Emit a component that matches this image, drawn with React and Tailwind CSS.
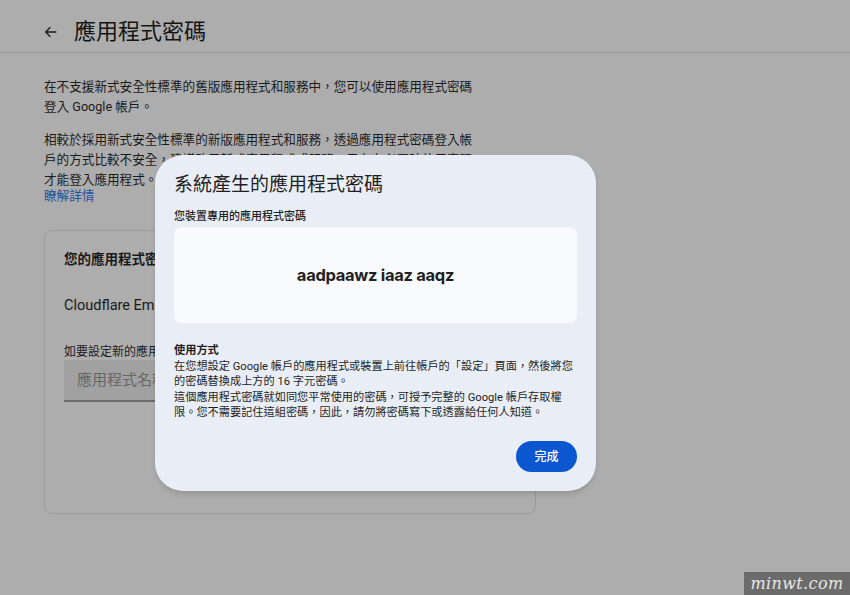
import React from 'react';

const font = { fontFamily: 'Roboto, "Noto Sans CJK TC", sans-serif' };

const BackArrow = () => (
    <svg width="16" height="16" viewBox="0 0 24 24" fill="none" stroke="#1c1c1c" strokeWidth="2">
        <path d="M20 12H5M11 5l-7 7 7 7" />
    </svg>
);

const PasswordDialog = () => (
    <div className="absolute left-[155px] top-[155px] w-[441px] h-[336px] rounded-[28px] bg-[#e9eef6] shadow-md px-[19px] pt-[16px] flex flex-col">
        <h2 className="text-[19px] leading-[28px] text-[#1f1f1f]">系統產生的應用程式密碼</h2>
        <div className="mt-[11px] text-[11px] leading-[14px] font-medium text-[#1f1f1f]">您裝置專用的應用程式密碼</div>
        <div className="mt-[3px] h-[96px] rounded-lg bg-[#f8fafd] flex items-center justify-center">
            <span className="text-[16.5px] font-bold text-[#1f1f1f] tracking-[-0.3px]" style={{ fontFamily: 'Inter, sans-serif' }}>
                aadpaawz iaaz aaqz
            </span>
        </div>
        <div className="mt-[20px] text-[11.2px] leading-[15.5px] text-[#1f1f1f] whitespace-nowrap">
            <div className="font-bold">使用方式</div>
            <p>
                在您想設定 Google 帳戶的應用程式或裝置上前往帳戶的「設定」頁面，然後將您<br />
                的密碼替換成上方的 16 字元密碼。
            </p>
            <p>
                這個應用程式密碼就如同您平常使用的密碼，可授予完整的 Google 帳戶存取權<br />
                限。您不需要記住這組密碼，因此，請勿將密碼寫下或透露給任何人知道。
            </p>
        </div>
        <div className="mt-auto mb-[19px] flex justify-end">
            <button className="w-[61px] h-[31px] rounded-full bg-[#0b57d0] text-white text-[12px] font-medium">完成</button>
        </div>
    </div>
);

const App = () => {
    return (
        <div className="relative w-full h-[595px] overflow-hidden bg-[#adadad] text-[#1a1a1a]" style={font}>
            {/* header */}
            <div className="h-[53px] border-b border-[#9b9b9b] flex items-center pl-[43px] pt-[11px]">
                <BackArrow />
                <h1 className="ml-[15px] text-[22px] leading-[28px] text-[#141414]">應用程式密碼</h1>
            </div>

            <div className="px-[44px] pt-[24px] whitespace-nowrap">
                <p className="text-[12.6px] leading-[20px]">
                    在不支援新式安全性標準的舊版應用程式和服務中，您可以使用應用程式密碼<br />
                    登入 Google 帳戶。
                </p>
                <p className="mt-[13px] text-[12.6px] leading-[20px]">
                    相較於採用新式安全性標準的新版應用程式和服務，透過應用程式密碼登入帳<br />
                    戶的方式比較不安全，建議改用新式應用程式或服務，只有在必要時使用密碼<br />
                    才能登入應用程式。
                </p>
                <div className="-mt-[4px] text-[12.6px] leading-[20px] text-[#24509c]">瞭解詳情</div>

                {/* card */}
                <div className="mt-[24px] w-[492px] h-[284px] rounded-lg border border-[#9a9a9a] px-[19px] pt-[18px]">
                    <div className="text-[13.5px] leading-[20px] font-bold">您的應用程式密碼</div>
                    <div className="mt-[27px] text-[14.5px] leading-[20px]">Cloudflare Email</div>
                    <div className="mt-[28px] text-[12px] leading-[16px]">如要設定新的應用程式密碼，請在下方輸入名稱</div>
                    <div className="w-[380px] h-[42px] bg-[#a1a1a1] border-b-2 border-[#6b6b6b] flex items-center pl-[13px]">
                        <span className="text-[15px] text-[#666]">應用程式名稱</span>
                    </div>
                </div>
            </div>

            <PasswordDialog />

            <div className="absolute right-0 bottom-0 w-[106px] h-[23px] bg-[#6b6b6b] flex items-center justify-center">
                <span className="text-[16px] italic text-[#e6e6e6] tracking-wide" style={{ fontFamily: '"DejaVu Serif", serif' }}>minwt.com</span>
            </div>
        </div>
    );
};

export default App;
